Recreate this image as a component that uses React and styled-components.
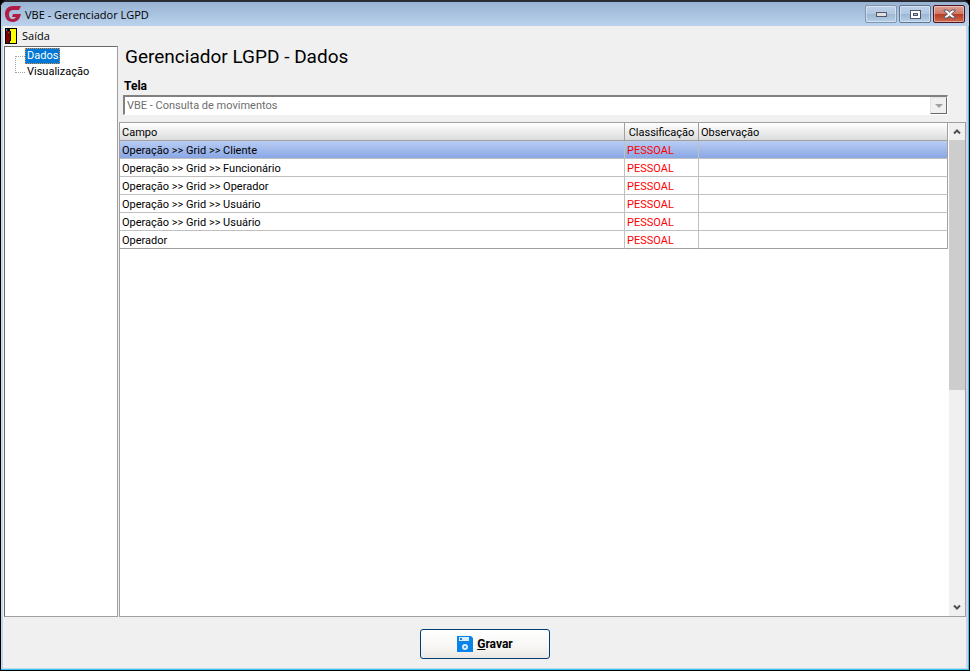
import { useState } from "react";
import styled, { createGlobalStyle } from "styled-components";

const GlobalStyle = createGlobalStyle`
  * {
    box-sizing: border-box;
  }
  body {
    margin: 0;
    background: #000;
    color: #000;
    font-family: Roboto, "Liberation Sans", sans-serif;
    font-size: 11px;
  }
  button, select {
    font-family: inherit;
    font-size: inherit;
    color: inherit;
  }
`;

const Window = styled.div`
  display: flex;
  flex-direction: column;
  min-height: 100vh;
  border: 1px solid #000;
  border-top: 2px solid #2b2b33;
  border-radius: 7px 7px 0 0;
  background: #f0f0f0;
  box-shadow: inset -1px -1px 0 #35c5e8, inset 2px 0 0 #c3d6ee, inset -3px -2px 0 #c3d6ee;
  overflow: hidden;
`;

const TitleBar = styled.header`
  display: flex;
  align-items: center;
  height: 24px;
  padding: 0 4px;
  gap: 2px;
  background: linear-gradient(#98b3d2, #bad2ec);
`;

const WindowTitle = styled.h1`
  flex: 1;
  margin: 0;
  padding-left: 1px;
  font-family: "Open Sans", sans-serif;
  font-size: 11px;
  font-weight: 400;
`;

const WindowButton = styled.button`
  display: flex;
  align-items: center;
  justify-content: center;
  width: 32px;
  height: 18px;
  padding: 0;
  border: 1px solid ${(p) => (p.$close ? "#4e1420" : p.$dim ? "#8296b0" : "#60748f")};
  border-radius: 2px;
  background: ${(p) =>
    p.$close
      ? "linear-gradient(#dd9f94 0%, #cf7868 48%, #b63a24 50%, #cd6a50 100%)"
      : "linear-gradient(#bdd1e8 0%, #b1c8e2 48%, #9bb6d3 50%, #b6cfe9 100%)"};
  box-shadow: inset 0 0 0 1px rgba(255, 255, 255, 0.4);
`;

const MenuBar = styled.nav`
  display: flex;
  height: 20px;
  padding: 0 4px;
`;

const MenuItem = styled.button`
  display: flex;
  align-items: center;
  gap: 5px;
  padding: 0;
  border: 0;
  background: none;
  font-family: "Open Sans", sans-serif;
  font-size: 11px;
  line-height: 18px;
`;

const Body = styled.div`
  display: flex;
  flex: 1;
  gap: 1px;
  padding: 0 3px;
`;

const Tree = styled.ul`
  flex: 0 0 114px;
  margin: 0;
  padding: 1px 0 0 10px;
  border: 1px solid #a0a0a0;
  border-top-color: #696969;
  border-left-color: #696969;
  background: #fff;
  list-style: none;
`;

const TreeNode = styled.li`
  display: flex;
  height: 16px;

  &::before {
    content: "";
    width: 9px;
    height: 8px;
    border-left: 1px dotted #a0a0a0;
    border-bottom: 1px dotted #a0a0a0;
  }
  &:first-child::before {
    height: 8px;
    margin-top: 8px;
    border-bottom: 0;
    border-top: 1px dotted #a0a0a0;
  }
`;

const TreeButton = styled.button`
  height: 16px;
  padding: 0 1px;
  border: 1px ${(p) => (p.$active ? "dotted #e08a3c" : "solid transparent")};
  background: ${(p) => (p.$active ? "#0078d7" : "none")};
  color: ${(p) => (p.$active ? "#fff" : "#000")};
  line-height: 14px;
`;

const Main = styled.main`
  display: flex;
  flex: 1;
  flex-direction: column;
  min-width: 0;
`;

const Heading = styled.h2`
  margin: 0;
  padding-left: 6px;
  font-size: 19px;
  font-weight: 400;
  line-height: 22px;
`;

const Field = styled.div`
  display: flex;
  flex-direction: column;
  padding: 10px 18px 7px 4px;
`;

const Label = styled.label`
  padding-left: 1px;
  font-size: 12px;
  font-weight: 700;
  line-height: 17px;
`;

const SelectBox = styled.div`
  display: flex;
  height: 20px;
  border: 1px solid #fff;
  border-top: 2px solid #808080;
  border-left: 2px solid #808080;
  background: #fff;
`;

const Select = styled.select`
  flex: 1;
  min-width: 0;
  padding: 0 2px;
  border: 0;
  appearance: none;
  background: #fff;

  &:disabled {
    color: #6d6d6d;
    opacity: 1;
  }
`;

const Arrow = styled.span`
  display: flex;
  align-items: center;
  justify-content: center;
  width: 17px;
  border: 1px solid #e3e3e3;
  border-right: 1px solid #696969;
  border-bottom: 1px solid #696969;
  background: #f0f0f0;
`;

const GridPanel = styled.section`
  display: flex;
  flex: 1;
  border: 1px solid #a0a0a0;
  background: #fff;
`;

const GridArea = styled.div`
  flex: 1;
  min-width: 0;
`;

const Grid = styled.table`
  width: 100%;
  table-layout: fixed;
  border-collapse: separate;
  border-spacing: 0;
  font-size: 11px;
`;

const HeadCell = styled.th`
  width: ${(p) => p.$width || "auto"};
  height: 18px;
  padding: 2px 2px 0;
  border-right: 1px solid #a0a0a0;
  border-bottom: 1px solid #a0a0a0;
  background: linear-gradient(#fff, #dcdcdc);
  font-weight: 400;
  line-height: 15px;
  text-align: ${(p) => p.$align || "left"};
`;

const Cell = styled.td`
  height: 18px;
  padding: 2px 2px 0;
  border-right: 1px solid #c0c0c0;
  border-bottom: 1px solid #c0c0c0;
  color: ${(p) => (p.$alert ? "#f00" : "#000")};
  line-height: 15px;
  white-space: nowrap;

  &:last-child {
    border-right-color: #a0a0a0;
  }
`;

const Row = styled.tr`
  background: ${(p) => (p.$selected ? "linear-gradient(#b9cdf3, #87a5e4)" : "#fff")};

  &:last-child ${Cell} {
    border-bottom-color: #a0a0a0;
  }
`;

const ScrollBar = styled.div`
  display: flex;
  flex-direction: column;
  width: 16px;
  margin-left: 1px;
  background: #f0f0f0;
`;

const ScrollButton = styled.button`
  display: flex;
  align-items: center;
  justify-content: center;
  height: 17px;
  padding: 0;
  border: 0;
  background: none;
`;

const ScrollTrack = styled.div`
  flex: 1;
`;

const ScrollThumb = styled.div`
  height: 250px;
  background: #cdcdcd;
`;

const Footer = styled.footer`
  display: flex;
  justify-content: center;
  padding: 12px 0 11px;
`;

const SaveButton = styled.button`
  display: flex;
  align-items: center;
  justify-content: center;
  gap: 4px;
  width: 130px;
  height: 30px;
  border: 1px solid #003c74;
  border-radius: 3px;
  background: linear-gradient(#fff, #f7f6f4 60%, #ece9e4);
  font-size: 12px;
  font-weight: 700;
`;

const campos = [
  "Operação >> Grid >> Cliente",
  "Operação >> Grid >> Funcionário",
  "Operação >> Grid >> Operador",
  "Operação >> Grid >> Usuário",
  "Operação >> Grid >> Usuário",
  "Operador",
];

const Logo = () => (
  <svg width="17" height="18" viewBox="0 0 17 18" aria-hidden="true">
    <path
      d="M16 1H8C3 1 0 4 0 9s3 8 8 8c4 0 7-3 8-8H8l-1 3h4c-1 1-2 2-3 2-3 0-4-2-4-5s2-4 4-4h6z"
      fill="#b01c45"
    />
  </svg>
);

const DoorIcon = () => (
  <svg width="12" height="16" viewBox="0 0 12 16" shapeRendering="crispEdges" aria-hidden="true">
    <path d="M0 0h12v16H0z" fill="#000" />
    <path d="M5 1h6v14H5z" fill="#ff0" />
    <path d="M1 1h1v1h1v1h2v10H4v2H1z" fill="#800000" />
    <path d="M1 1h1v2H1zM3 4h1v1H3z" fill="#00a0a0" />
    <path d="M5 3h1v10H5zM4 12h1v3H4zM3 7h1v1H3z" fill="#000" />
  </svg>
);

const DiskIcon = () => (
  <svg width="16" height="16" viewBox="0 0 16 16" aria-hidden="true">
    <path d="M0 0h14l2 2v14H0z" fill="#0a84e8" />
    <path d="M2 1h10v4H2z" fill="#d8ecfb" />
    <path d="M3 2h2v2H3z" fill="#0a84e8" />
    <circle cx="8" cy="11" r="2" fill="none" stroke="#d8ecfb" strokeWidth="2" />
  </svg>
);

const MinimizeIcon = () => (
  <svg width="11" height="5" viewBox="0 0 11 5" shapeRendering="crispEdges" aria-hidden="true">
    <path d="M0 0h11v5H0z" fill="#535666" />
    <path d="M1 1h9v3H1z" fill="#e0e0e0" />
  </svg>
);

const MaximizeIcon = () => (
  <svg width="11" height="9" viewBox="0 0 11 9" shapeRendering="crispEdges" aria-hidden="true">
    <path d="M0 0h11v9H0z" fill="#535666" />
    <path d="M1 1h9v7H1z" fill="#fff" />
    <path d="M3 3h5v3H3z" fill="#535666" />
    <path d="M4 4h3v1H4z" fill="#a7bedb" />
  </svg>
);

const CloseIcon = () => (
  <svg width="13" height="10" viewBox="0 0 13 10" aria-hidden="true">
    <path
      d="M1 1h3l2.500 2L9 1h3v1L8.500 5 12 8v1H9L6.500 7 4 9H1V8l3.500-3L1 2z"
      fill="#fff"
      stroke="#535666"
    />
  </svg>
);

const Chevron = ({ down }) => (
  <svg width="8" height="7" viewBox="0 0 8 7" aria-hidden="true">
    <path
      d={down ? "M1 1.500l3 3 3-3" : "M1 5.500l3-3 3 3"}
      fill="none"
      stroke="#505050"
      strokeWidth="2"
    />
  </svg>
);

const App = () => {
  const [page, setPage] = useState("Dados");
  const [selected, setSelected] = useState(0);

  return (
    <>
      <GlobalStyle />
      <Window>
        <TitleBar>
          <Logo />
          <WindowTitle>VBE - Gerenciador LGPD</WindowTitle>
          <WindowButton $dim aria-label="Minimizar">
            <MinimizeIcon />
          </WindowButton>
          <WindowButton aria-label="Maximizar">
            <MaximizeIcon />
          </WindowButton>
          <WindowButton $close aria-label="Fechar">
            <CloseIcon />
          </WindowButton>
        </TitleBar>
        <MenuBar>
          <MenuItem>
            <DoorIcon />
            Saída
          </MenuItem>
        </MenuBar>
        <Body>
          <Tree>
            {["Dados", "Visualização"].map((name) => (
              <TreeNode key={name}>
                <TreeButton $active={page === name} onClick={() => setPage(name)}>
                  {name}
                </TreeButton>
              </TreeNode>
            ))}
          </Tree>
          <Main>
            <Heading>Gerenciador LGPD - Dados</Heading>
            <Field>
              <Label htmlFor="tela">Tela</Label>
              <SelectBox>
                <Select id="tela" disabled>
                  <option>VBE - Consulta de movimentos</option>
                </Select>
                <Arrow>
                  <svg width="8" height="4" viewBox="0 0 8 4" aria-hidden="true">
                    <path d="M0 0h8L4 4z" fill="#a0a0a0" />
                  </svg>
                </Arrow>
              </SelectBox>
            </Field>
            <GridPanel>
              <GridArea>
                <Grid>
                  <thead>
                    <tr>
                      <HeadCell>Campo</HeadCell>
                      <HeadCell $width="74px" $align="center">Classificação</HeadCell>
                      <HeadCell $width="249px">Observação</HeadCell>
                    </tr>
                  </thead>
                  <tbody>
                    {campos.map((campo, i) => (
                      <Row key={i} $selected={selected === i} onClick={() => setSelected(i)}>
                        <Cell>{campo}</Cell>
                        <Cell $alert>PESSOAL</Cell>
                        <Cell />
                      </Row>
                    ))}
                  </tbody>
                </Grid>
              </GridArea>
              <ScrollBar>
                <ScrollButton aria-label="Rolar para cima">
                  <Chevron />
                </ScrollButton>
                <ScrollTrack>
                  <ScrollThumb />
                </ScrollTrack>
                <ScrollButton aria-label="Rolar para baixo">
                  <Chevron down />
                </ScrollButton>
              </ScrollBar>
            </GridPanel>
          </Main>
        </Body>
        <Footer>
          <SaveButton accessKey="g">
            <DiskIcon />
            <span>
              <u>G</u>ravar
            </span>
          </SaveButton>
        </Footer>
      </Window>
    </>
  );
};

export default App;
